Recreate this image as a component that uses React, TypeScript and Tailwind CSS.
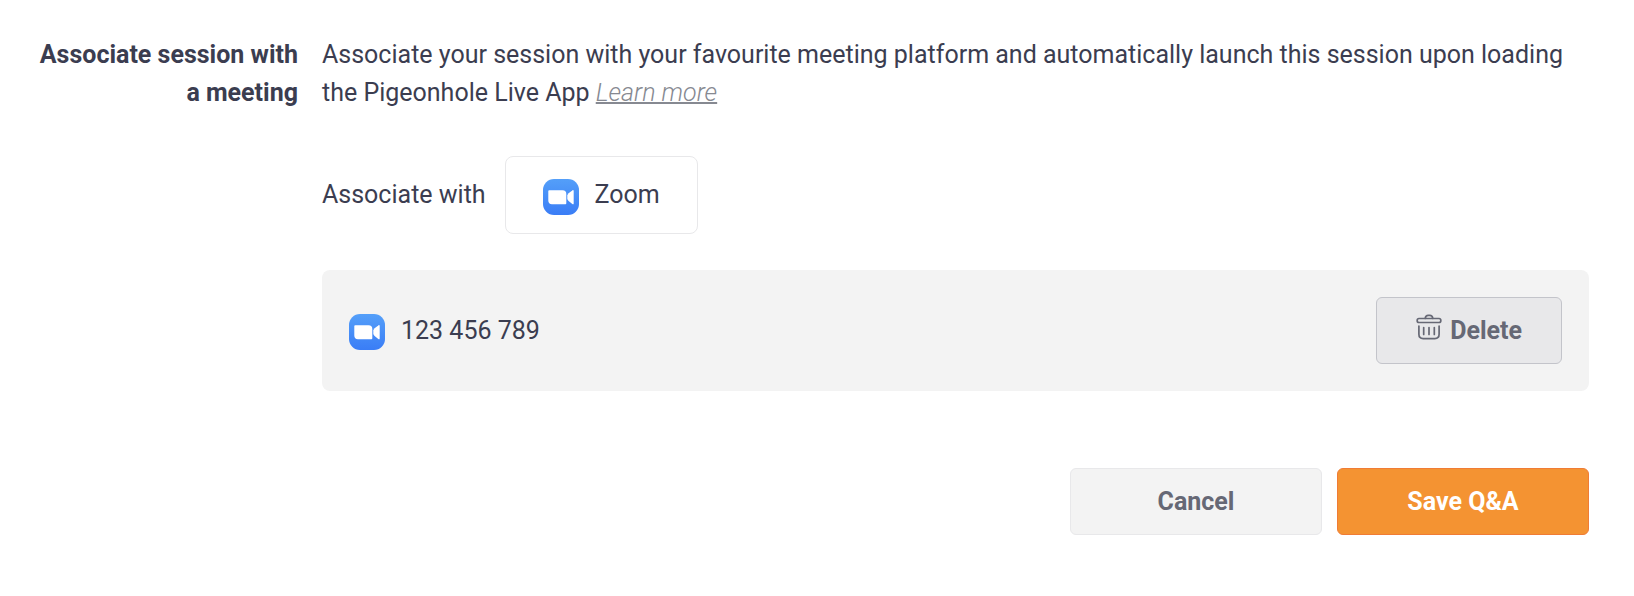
import { useId } from "react";

function ZoomIcon() {
  const gradientId = useId();

  return (
    <svg viewBox="0 0 36 36" className="h-9 w-9 shrink-0" aria-hidden="true">
      <defs>
        <linearGradient id={gradientId} x1="0" y1="0" x2="0" y2="1">
          <stop offset="0" stopColor="#549ff9" />
          <stop offset="1" stopColor="#3a7df6" />
        </linearGradient>
      </defs>
      <rect width="36" height="36" rx="11" fill={`url(#${gradientId})`} />
      <path
        d="M6.2 11.2h13.4a3.7 3.7 0 0 1 3.7 3.7v9.4a.9.9 0 0 1-.9.9H9a3.7 3.7 0 0 1-3.7-3.7v-9.4a.9.9 0 0 1 .9-.9Z"
        fill="#fff"
      />
      <path
        d="M24.300 16.400c.3-.8.7-1.500 1.300-2.100l3.700-2.900c.8-.6 1.400-.3 1.400.6v12.400c0 .9-.6 1.200-1.400.6l-3.700-2.900c-.6-.6-1-1.300-1.300-2.100Z"
        fill="#fff"
      />
    </svg>
  );
}

function TrashIcon() {
  return (
    <svg
      viewBox="0 0 26 26"
      className="h-[26px] w-[26px] shrink-0"
      fill="none"
      stroke="currentColor"
      strokeWidth="1.7"
      strokeLinecap="round"
      strokeLinejoin="round"
      aria-hidden="true"
    >
      <rect x="1.2" y="4.5" width="23.6" height="4" rx="1.8" />
      <path d="M9.2 4.300c.3-1.900 1.300-2.900 2.900-2.900h1.800c1.600 0 2.600 1 2.900 2.900" />
      <path d="M2.900 12v8.300c0 2.800 1.500 4.300 4.300 4.300h11.600c2.800 0 4.300-1.500 4.300-4.300v-8.300" />
      <path d="M7.700 13.500v7M13 13.500v7M18.300 13.500v7" />
    </svg>
  );
}

export default function App() {
  return (
    <main className="bg-white pt-9 pr-[45px] pb-[60px] pl-8 font-[Roboto,sans-serif] text-[25px] leading-[38px] text-[#3b3d50]">
      <section className="flex gap-6">
        <h2 className="w-[266px] shrink-0 text-right font-bold">
          Associate session with a meeting
        </h2>

        <div className="min-w-0 flex-1">
          <p>
            Associate your session with your favourite meeting platform and
            automatically launch this session upon loading the Pigeonhole Live
            App{" "}
            <a
              href="#"
              className="font-light text-[#868991] italic underline decoration-2"
            >
              Learn more
            </a>
          </p>

          <div className="mt-11 flex items-center gap-[19px]">
            <span>Associate with</span>
            <button
              type="button"
              className="flex h-[78px] items-center gap-4 rounded-lg border border-[#e8e8ea] bg-white px-[37px]"
            >
              <span className="pt-1">
                <ZoomIcon />
              </span>
              Zoom
            </button>
          </div>

          <div className="mt-9 flex items-center justify-between rounded-lg bg-[#f3f3f3] p-[27px]">
            <div className="flex items-center gap-4">
              <span className="pt-0.5">
                <ZoomIcon />
              </span>
              <span>123 456 789</span>
            </div>
            <button
              type="button"
              className="flex h-[67px] items-center gap-2 rounded-md border border-[#c3c4ca] bg-[#e8e8ea] px-[39px] font-bold text-[#666875]"
            >
              <span className="pb-2">
                <TrashIcon />
              </span>
              Delete
            </button>
          </div>
        </div>
      </section>

      <div className="mt-[77px] flex justify-end gap-[15px] font-bold">
        <button
          type="button"
          className="h-[67px] w-[252px] rounded-md border border-[#e8e8ea] bg-[#f3f3f3] text-[#666875]"
        >
          Cancel
        </button>
        <button
          type="submit"
          className="h-[67px] w-[252px] rounded-md border border-[#f07c35] bg-[#f49332] text-white"
        >
          Save Q&amp;A
        </button>
      </div>
    </main>
  );
}
